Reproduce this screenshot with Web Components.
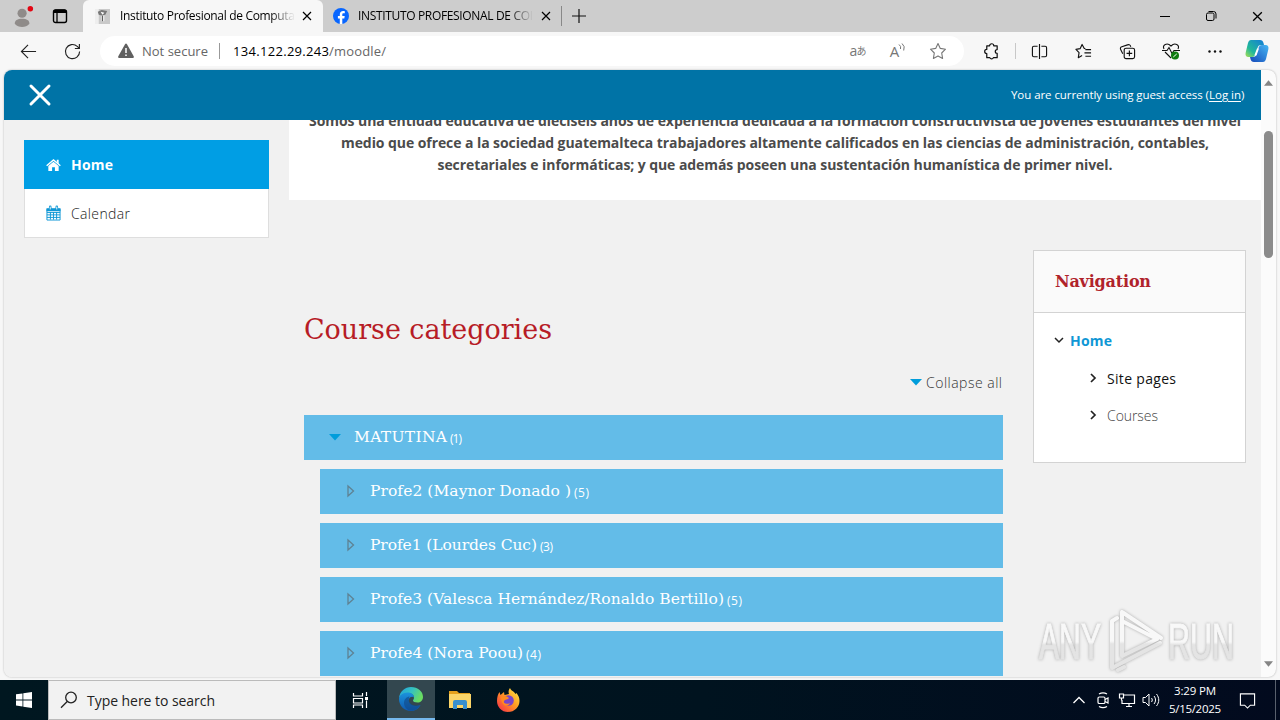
<!DOCTYPE html>
<html lang="en">
<head>
<meta charset="utf-8">
<title>Instituto Profesional de Computación</title>
<style>
  html, body { margin: 0; height: 100%; overflow: hidden; }
  body { font-family: "Open Sans", "Noto Sans", sans-serif; background: #f7f7f7; }
</style>
</head>
<body>
<desktop-screen>
  <browser-tabs slot="browser"></browser-tabs>
  <browser-toolbar slot="browser"></browser-toolbar>
  <browser-viewport slot="browser">
    <moodle-page>
      <side-menu slot="menu">
        <menu-row icon="home" active><fit-text width="42">Home</fit-text></menu-row>
        <menu-row icon="calendar"><fit-text width="59">Calendar</fit-text></menu-row>
      </side-menu>
      <course-tree slot="main">
        <course-row open><fit-text width="93">MATUTINA</fit-text><fit-text slot="count" width="12">(1)</fit-text></course-row>
        <course-row nested><fit-text width="201">Profe2 (Maynor Donado )</fit-text><fit-text slot="count" width="15">(5)</fit-text></course-row>
        <course-row nested><fit-text width="167">Profe1 (Lourdes Cuc)</fit-text><fit-text slot="count" width="13">(3)</fit-text></course-row>
        <course-row nested><fit-text width="354">Profe3 (Valesca Hernández/Ronaldo Bertillo)</fit-text><fit-text slot="count" width="15">(5)</fit-text></course-row>
        <course-row nested><fit-text width="153">Profe4 (Nora Poou)</fit-text><fit-text slot="count" width="15">(4)</fit-text></course-row>
      </course-tree>
      <nav-block slot="aside"></nav-block>
    </moodle-page>
  </browser-viewport>
  <task-bar slot="taskbar"></task-bar>
  <brand-watermark slot="overlay"></brand-watermark>
</desktop-screen>

<script>
// Icon shapes, each with its own viewBox size.
const ICONS = {
  profile: ['0 0 24 24', '<circle cx="11" cy="9" r="5" fill="#8f8b89"/><path d="M3 20.500c0-4 3-5.500 8-5.500s8 1.500 8 5.500c-2 2.500-5 3.500-8 3.500s-6-1-8-3.500z" fill="#8f8b89"/><circle cx="20" cy="4" r="3" fill="#e30613"/>'],
  workspace: ['0 0 16 16', '<rect x="1.500" y="2" width="13" height="12.500" rx="2" fill="none" stroke="#000" stroke-width="1.400"/><path d="M1.500 3.500a2 2 0 0 1 2-2h9a2 2 0 0 1 2 2V5h-13z"/><path d="M5 5v9" stroke="#000" stroke-width="1.300"/>'],
  crest: ['0 0 16 16', '<rect width="16" height="16" fill="#c9c9c9"/><path d="M0 0h4v16H0z" fill="#eee"/><path d="M3 3l4-2 6 1-2 4-4 1-3-1z" fill="#777"/><path d="M6 3l4 1-2 2z" fill="#fff"/><path d="M7 7h3v6H7z" fill="#e8e8e8"/><path d="M8 7v6" stroke="#555"/>'],
  facebook: ['0 0 16 16', '<circle cx="8" cy="8" r="8" fill="#0866ff"/><path d="M6.800 16v-5.500H4.900V8h1.900V6.700c0-2.500 1.200-3.700 3.500-3.700.5 0 1 .1 1.500.2v2.100h-1.200c-1 0-1.300.5-1.300 1.300V8h2.400l-.4 2.500h-2V16z" fill="#fff"/>'],
  x: ['0 0 12 12', '<path d="M2 2l8 8M10 2l-8 8" fill="none" stroke="currentColor" stroke-width="1.200"/>'],
  bigx: ['0 0 22 22', '<path d="M2 2l18 18M20 2L2 20" stroke="#fff" stroke-width="3" stroke-linecap="round"/>'],
  plus: ['0 0 14 14', '<path d="M7 0v14M0 7h14" stroke="#111" stroke-width="1.200"/>'],
  minimize: ['0 0 12 12', '<path d="M1 6.500h10" stroke="#000"/>'],
  restore: ['0 0 12 12', '<rect x="1.500" y="3" width="7.500" height="7.500" rx="1.500" fill="none" stroke="#000"/><path d="M3.500 1.500h5a2.500 2.500 0 0 1 2.500 2.500v4.500" fill="none" stroke="#000"/>'],
  back: ['0 0 18 18', '<path d="M17 9H1.500M8.500 2L1.500 9l7 7" fill="none" stroke="#222" stroke-width="1.200"/>'],
  refresh: ['0 0 18 18', '<path d="M16.500 9A7.500 7.500 0 1 1 14 3.500l2 2M16.300 1v4.800h-4.800" fill="none" stroke="#222" stroke-width="1.200"/>'],
  warning: ['0 0 16 16', '<path d="M7 1.200a1.200 1.200 0 0 1 2 0l6.700 12a1.200 1.200 0 0 1-1 1.800H1.300a1.200 1.200 0 0 1-1-1.800z" fill="#606060"/><path d="M8 5v5M8 11.500v1.500" stroke="#fff" stroke-width="1.500"/>'],
  waves: ['0 0 8 8', '<path d="M1 1.500a4 4 0 0 1 1.500 4.500M4 .5a6 6 0 0 1 1.700 7" fill="none" stroke="#777"/>'],
  star: ['0 0 18 18', '<path d="M9 1.500l2.300 4.900 5.200.8-3.800 3.800.9 5.400L9 13.900l-4.600 2.500.9-5.400-3.800-3.800 5.200-.8z" fill="none" stroke="#777" stroke-width="1.100" stroke-linejoin="round"/>'],
  puzzle: ['0 0 18 18', '<path d="M4 3h3a2.200 2.200 0 0 1 4.400 0H15v4a2 2 0 0 0 0 4v4.500h-4a2 2 0 0 1-3.800 0H4v-4.300a2.200 2.200 0 0 1 0-4.400z" fill="none" stroke="#111" stroke-width="1.300" stroke-linejoin="round"/>'],
  split: ['0 0 18 18', '<path d="M7 3.500H3a1.500 1.500 0 0 0-1.500 1.500v8A1.500 1.500 0 0 0 3 14.500h4M11 3.500h4A1.500 1.500 0 0 1 16.500 5v8a1.500 1.500 0 0 1-1.500 1.500h-4M9 1v16" fill="none" stroke="#111" stroke-width="1.200"/>'],
  favorites: ['0 0 18 18', '<path d="M11 6L9.800 5.800 7.500 1.500 5.400 6l-4.400.7 3.300 3.500-.8 5.300 4-2.200M11 7h6M10 10.500h7M11 14h6" fill="none" stroke="#111" stroke-width="1.200" stroke-linejoin="round"/>'],
  collections: ['0 0 18 18', '<path d="M4 11.500L2 7.500C1 5.500 1.500 4.500 3 4l6-2c2-.7 2.800 0 3.500 2" fill="none" stroke="#111" stroke-width="1.200"/><rect x="5.500" y="5.500" width="11" height="11" rx="2" fill="none" stroke="#111" stroke-width="1.200"/><path d="M11 8v6M8 11h6" stroke="#111" stroke-width="1.200"/>'],
  health: ['0 0 18 18', '<path d="M9 16L3 10M2 7C0 3 5 0 9 4c4-4 9-1 7 3M0 8.500h5l2-3 3 6 2-3h6" fill="none" stroke="#111" stroke-width="1.100"/><circle cx="13" cy="13.500" r="4" fill="#107c10"/><path d="M11.300 15l3.400-3" stroke="#fff"/>'],
  dots: ['0 0 18 18', '<g fill="#111"><circle cx="3.500" cy="9.500" r="1.200"/><circle cx="9" cy="9.500" r="1.200"/><circle cx="14.500" cy="9.500" r="1.200"/></g>'],
  copilot: ['0 0 24 24', '<defs><linearGradient id="a" x1="0" y1="1" x2="1" y2="0"><stop stop-color="#a9df52"/><stop offset=".35" stop-color="#21b89a"/><stop offset="1" stop-color="#137bd8"/></linearGradient><linearGradient id="b" x1="0" y1="1" x2="1" y2="0"><stop stop-color="#1549b9"/><stop offset="1" stop-color="#46b7f4"/></linearGradient></defs><path d="M6 1h9c2 0 3 1 3.500 3L19 6h-3c-2 0-3 1-3.500 3l-2 6c-.6 2-1.500 3-3.500 3H3.500C1 18 0 16 .7 13.500L3 4c.6-2 1.500-3 3-3z" fill="url(#a)"/><path d="M18 23H9c-2 0-3-1-3.500-3L5 18h3c2 0 3-1 3.500-3l2-6c.6-2 1.500-3 3.500-3h3.500c2.500 0 3.500 2 2.800 4.500L21 20c-.6 2-1.500 3-3 3z" fill="url(#b)"/><path d="M12 9.500h2l-2.500 7H9.300z" fill="#fff"/>'],
  home: ['0 0 16 16', '<path d="M8 4.500l5.500 4.500v5.500h-4v-4h-3v4h-4V9z" fill="#fff"/><path d="M.7 8.800L8 2.600l7.300 6.200" fill="none" stroke="#fff" stroke-width="1.500"/><path d="M11.500 2.500h2V7l-2-2z" fill="#fff"/>'],
  calendar: ['0 0 16 16', '<path d="M1 4h14v11.500H1zM1 7.500h14M1 10h14M1 12.700h14M4.700 7v8M8 7v8M11.300 7v8" fill="none" stroke="#0f97d5"/><path d="M.5 3h15v3H.5z" fill="#0f97d5"/><path d="M4.500 1.500v3M11.500 1.500v3" stroke="#0f97d5" stroke-width="2.800" stroke-linecap="round"/><path d="M4.500 1.200v3M11.500 1.200v3" stroke="#fff"/>'],
  caretdown: ['0 0 12 7', '<path d="M0 0h12L6 6.500z" fill="#009ddb"/>'],
  caretright: ['0 0 8 12', '<path d="M1 1l5.500 5L1 11z" fill="none" stroke="#5e8293" stroke-width="1.300"/>'],
  chevdown: ['0 0 10 10', '<path d="M1 3l4 4 4-4" fill="none" stroke="#222" stroke-width="1.500"/>'],
  chevright: ['0 0 10 10', '<path d="M3 1l4 4-4 4" fill="none" stroke="#222" stroke-width="1.700"/>'],
  windows: ['0 0 16 16', '<path d="M0 2.300L6.500 1.400v6.100H0zM7.300 1.300L16 0v7.500H7.300zM0 8.400h6.500v6.100L0 13.600zM7.300 8.400H16V16l-8.700-1.300z" fill="#fff"/>'],
  search: ['0 0 18 18', '<circle cx="11" cy="6.500" r="5.300" fill="none" stroke="#222" stroke-width="1.300"/><path d="M7.200 10.500L1 16.800" stroke="#222" stroke-width="1.300"/>'],
  taskview: ['0 0 17 17', '<path d="M1.500 1v3h9V1M1.500 16v-3h9v3M1.500 6.500h9v4.500h-9zM14.500 0v4M14.500 8.500V16" fill="none" stroke="#fff" stroke-width="1.200"/><path d="M13 5h3v3h-3z" fill="#fff"/>'],
  edge: ['0 0 24 24', '<defs><linearGradient id="e" x1="0" y1="0" x2="1" y2=".4"><stop stop-color="#1f9fe0"/><stop offset=".55" stop-color="#35c2c0"/><stop offset="1" stop-color="#69dc62"/></linearGradient><linearGradient id="f" x1="0" y1="0" x2="0" y2="1"><stop stop-color="#1b93dd"/><stop offset="1" stop-color="#0f58ae"/></linearGradient></defs><path d="M0 11C1 4 6 0 12 0c7 0 12 4.500 12 10 0 3.500-2.500 5.500-5.500 5.500-3 0-4.500-1-4.500-2 0-.7 1-1.200 1-3C15 8 12.500 6 9 6c-4 0-7.500 2-9 5z" fill="url(#e)"/><path d="M0 12c0-3.500 4-6.500 8.500-6.500S15 8 15 10.500C13.500 9 11 9.500 10 12c-1.500 4.500 4 9 11.500 6C19.500 22 16 24 12 24 5 24 0 18.500 0 12z" fill="url(#f)"/><path d="M5 16c0-3.500 2.300-6 5.500-6.500C8 14 12 20.500 21.500 18c-3 5-8 6-11 5.500C7.500 22.500 5 19.500 5 16z" fill="#114a8b" opacity=".65"/>'],
  folder: ['0 0 22 20', '<path d="M0 1h8l2 2h11v4H0z" fill="#e5a11c"/><path d="M0 4h22v14H0z" fill="#fbd568"/><path d="M4 19v-7a2 2 0 0 1 2-2h10a2 2 0 0 1 2 2v7h-4v-4H8v4z" fill="#378fce"/>'],
  firefox: ['0 0 24 24', '<defs><linearGradient id="g" x1="1" y1="0" x2="0" y2="1"><stop stop-color="#fff14a"/><stop offset=".45" stop-color="#ff9c22"/><stop offset="1" stop-color="#f5234d"/></linearGradient></defs><path d="M1 13c0-4 1-7 2.500-9l1 3L8 4l.5 3L13 6c-1-2 0-5 1-6 1 3 4 3 5.500 6l1-1c2 2.500 3 5 3 8 0 6-5 11-11.500 11S1 19 1 13z" fill="url(#g)"/><circle cx="12.500" cy="12.500" r="5.300" fill="#7845c8"/><path d="M5 9c3-2 6-1 8 1-1 2-4 1-5 3s2 4 6 2c-2 5-9 3-9-6z" fill="#ff8a1e"/>'],
  chevup: ['0 0 14 14', '<path d="M1.500 10L7 4.500l5.500 5.500" fill="none" stroke="#fff" stroke-width="1.300"/>'],
  meet: ['0 0 16 16', '<rect x="3" y="5" width="7" height="6.500" rx="1.300" fill="none" stroke="#fff" stroke-width="1.200"/><path d="M10 7.500l3-1.500v5l-3-1.500M4 2c2.500-1.500 5.500-1.500 8 0M4 14.500c2.500 1.500 5.500 1.500 8 0" fill="none" stroke="#fff" stroke-width="1.200"/>'],
  network: ['0 0 18 16', '<path d="M6 3h10.500v8.500H4V8M8 14.500h6M11 11.500v3M1.500 2h4v4h-4zM3.500 6v2.500" fill="none" stroke="#fff" stroke-width="1.200"/>'],
  sound: ['0 0 18 16', '<path d="M1 5.500h2.500L7 2v12l-3.500-3.500H1z" fill="none" stroke="#fff"/><path d="M9.500 6c1 1.300 1 2.700 0 4M12 4c2 2.500 2 5.500 0 8M14.500 2c3 4 3 8 0 12" fill="none" stroke="#fff"/>'],
  notice: ['0 0 18 18', '<path d="M1.500 2h15v12H12l-3 3-3-3H1.500z" fill="none" stroke="#fff" stroke-width="1.200"/>'],
  arrowup: ['0 0 10 6', '<path d="M0 6l5-6 5 6z" fill="#858585"/>'],
  arrowdown: ['0 0 10 6', '<path d="M0 0l5 6 5-6z" fill="#858585"/>']
};

// Defines an element whose shadow root is filled from a markup string.
function define(name, html, setup) {
  const template = document.createElement('template');
  template.innerHTML = html;
  customElements.define(name, class extends HTMLElement {
    constructor() {
      super();
      this.attachShadow({ mode: 'open' }).appendChild(template.content.cloneNode(true));
    }
    connectedCallback() {
      if (setup) setup(this, this.shadowRoot);
    }
  });
}

// <ui-icon name="star" w="18" h="18">
define('ui-icon', `<style>:host{display:inline-flex;flex:none} svg{display:block;overflow:visible}</style><span></span>`, (el, root) => {
  const [box, shape] = ICONS[el.getAttribute('name')];
  const w = el.getAttribute('w') || 18;
  const h = el.getAttribute('h') || w;
  root.querySelector('span').innerHTML = `<svg width="${w}" height="${h}" viewBox="${box}">${shape}</svg>`;
});

// A single line of text that is tracked out or in to fill a set width.
define('fit-text', `<style>:host{display:inline-block;flex:none;white-space:pre} span{display:inline-block;white-space:pre}</style><span><slot></slot></span>`, (el, root) => {
  const span = root.querySelector('span');
  const width = Number(el.getAttribute('width'));
  el.style.width = width + 'px';
  requestAnimationFrame(() => {
    const count = el.textContent.length;
    const natural = span.getBoundingClientRect().width;
    span.style.letterSpacing = (width - natural) / Math.max(1, count - 1) + 'px';
  });
});

define('desktop-screen', `
  <style>
    :host { display: flex; flex-direction: column; position: relative; width: 1280px; height: 720px; overflow: hidden; }
    .browser { height: 680px; display: flex; flex-direction: column; background: #f7f7f7; }
  </style>
  <div class="browser"><slot name="browser"></slot></div>
  <slot name="taskbar"></slot>
  <slot name="overlay"></slot>`);

define('browser-tabs', `
  <style>
    :host { display: flex; height: 32px; background: #cdcdcd; font-size: 12px; color: #000; }
    .left { width: 83px; display: flex; align-items: center; box-sizing: border-box; padding-left: 12px; gap: 18px; }
    .tab { display: flex; align-items: center; box-sizing: border-box; }
    .active { width: 240px; background: #f7f7f7; border-radius: 6px 6px 0 0; padding-left: 12px; }
    .other { width: 238px; padding-left: 10px; }
    .title { overflow: hidden; margin: 0 7px 2px 9px; width: 175px; -webkit-mask-image: linear-gradient(90deg, #000 86%, transparent 100%); }
    .active .title { margin: 0 6px 2px 10px; }
    .bar { width: 1px; height: 20px; background: #888; align-self: center; }
    .plus { margin: 9px 0 0 10px; }
    .window { margin-left: auto; display: flex; align-items: center; }
    .window ui-icon { width: 46px; justify-content: center; }
  </style>
  <div class="left"><ui-icon name="profile" w="22"></ui-icon><ui-icon name="workspace" w="16"></ui-icon></div>
  <div class="tab active">
    <ui-icon name="crest" w="15"></ui-icon>
    <div class="title"><fit-text width="175">Instituto Profesional de Computa</fit-text></div>
    <ui-icon name="x" w="12"></ui-icon>
  </div>
  <div class="tab other">
    <ui-icon name="facebook" w="16"></ui-icon>
    <div class="title"><fit-text width="175">INSTITUTO PROFESIONAL DE COI</fit-text></div>
    <ui-icon name="x" w="12"></ui-icon>
  </div>
  <div class="bar"></div>
  <ui-icon class="plus" name="plus" w="14"></ui-icon>
  <div class="window"><ui-icon name="minimize" w="12"></ui-icon><ui-icon name="restore" w="12"></ui-icon><ui-icon name="x" w="13"></ui-icon></div>`);

define('browser-toolbar', `
  <style>
    :host { display: flex; align-items: center; height: 38px; font-size: 13px; color: #666; }
    ui-icon { justify-content: center; width: 44px; flex: none; }
    ui-icon.back { margin-left: 6px; }
    .pill { width: 864px; height: 30px; box-sizing: border-box; border-radius: 15px; background: #fff; margin: 0 5px 0 6px; padding: 0 6px 0 18px; display: flex; align-items: center; }
    .pill ui-icon.warn { width: 16px; margin-right: 8px; }
    .sep { width: 1px; height: 16px; background: #999; margin: 0 13px 0 11px; }
    .sep.light { background: #c8c8c8; margin: 0 1px 0 2px; }
    b { font-weight: 400; color: #000; }
    .tools { margin-left: auto; display: flex; align-items: center; }
    .tools > * { width: 40px; display: flex; justify-content: center; }
    .translate { font: 14px/20px "Open Sans", "Noto Sans CJK JP", sans-serif; color: #777; }
    .translate small { font-size: 10px; margin-left: -1px; }
    .read { color: #777; font-size: 15px; line-height: 20px; }
    .read ui-icon { width: 8px; height: 8px; margin: 2px 0 0 -1px; }
  </style>
  <ui-icon class="back" name="back" w="17"></ui-icon>
  <ui-icon name="refresh" w="17"></ui-icon>
  <div class="pill">
    <ui-icon class="warn" name="warning" w="16"></ui-icon>
    <fit-text width="66">Not secure</fit-text>
    <div class="sep"></div>
    <b><fit-text width="96">134.122.29.243</fit-text></b><fit-text width="57">/moodle/</fit-text>
    <div class="tools">
      <div class="translate">a<small>あ</small></div>
      <div class="read">A<ui-icon name="waves" w="8"></ui-icon></div>
      <ui-icon name="star" w="18"></ui-icon>
    </div>
  </div>
  <ui-icon name="puzzle" w="17"></ui-icon>
  <div class="sep light"></div>
  <ui-icon name="split" w="17"></ui-icon>
  <ui-icon name="favorites" w="17"></ui-icon>
  <ui-icon name="collections" w="17"></ui-icon>
  <ui-icon name="health" w="18"></ui-icon>
  <ui-icon name="dots" w="18"></ui-icon>
  <ui-icon name="copilot" w="24" style="width:40px"></ui-icon>`);

define('browser-viewport', `
  <style>
    :host { display: flex; height: 607px; margin: 0 4px; border-radius: 8px; overflow: hidden; background: #fbfbfb; box-shadow: 0 0 2px #aaa; }
    .content { width: 1257px; flex: none; overflow: hidden; }
    .scroll { width: 15px; display: flex; flex-direction: column; align-items: center; box-sizing: border-box; padding: 10px 0 10px; }
    .thumb { width: 9px; height: 127px; border-radius: 5px; background: #8b8b8b; margin: 45px 0 auto; }
  </style>
  <div class="content"><slot></slot></div>
  <div class="scroll"><ui-icon name="arrowup" w="9" h="6"></ui-icon><div class="thumb"></div><ui-icon name="arrowdown" w="9" h="6"></ui-icon></div>`);

define('moodle-page', `
  <style>
    :host { display: flex; flex-direction: column; height: 607px; background: #f1f1f1; color: #555; }
    header { height: 50px; flex: none; display: flex; align-items: center; justify-content: space-between; box-sizing: border-box; padding: 0 16px 1px 25px; background: #0073a6; color: #fff; font-size: 11.5px; }
    u { text-underline-offset: 2px; }
    .body { display: flex; flex: 1; min-height: 0; overflow: hidden; }
    .menu { width: 245px; margin: 20px 20px 0; }
    .right { width: 972px; flex: none; }
    .banner { height: 80px; background: #fff; overflow: hidden; font-size: 14px; font-weight: 700; line-height: 22px; color: #4b4b4b; display: flex; flex-direction: column; align-items: center; }
    .banner fit-text { height: 22px; }
    .banner fit-text:first-child { margin-top: -10px; }
    .columns { display: flex; padding-left: 15px; }
    .main { width: 699px; margin-right: 30px; }
    .aside { width: 213px; padding-top: 50px; }
  </style>
  <header>
    <ui-icon name="bigx" w="22"></ui-icon>
    <span><fit-text width="198">You are currently using guest access (</fit-text><fit-text width="32"><u>Log in</u></fit-text><fit-text width="4">)</fit-text></span>
  </header>
  <div class="body">
    <div class="menu"><slot name="menu"></slot></div>
    <div class="right">
      <div class="banner">
        <fit-text width="932">Somos una entidad educativa de dieciséis años de experiencia dedicada a la formación constructivista de jóvenes estudiantes del nivel</fit-text>
        <fit-text width="868">medio que ofrece a la sociedad guatemalteca trabajadores altamente calificados en las ciencias de administración, contables,</fit-text>
        <fit-text width="675">secretariales e informáticas; y que además poseen una sustentación humanística de primer nivel.</fit-text>
      </div>
      <div class="columns">
        <div class="main"><slot name="main"></slot></div>
        <div class="aside"><slot name="aside"></slot></div>
      </div>
    </div>
  </div>`);

define('side-menu', `
  <style>:host { display: block; box-sizing: border-box; border: 1px solid #dedede; border-top: 0; background: #fff; }</style>
  <slot></slot>`);

define('menu-row', `
  <style>
    :host { display: flex; align-items: center; height: 48px; padding-left: 21px; gap: 10px; font-size: 14px; font-weight: 300; color: #222; }
    :host([active]) { height: 49px; margin: 0 -1px; padding-left: 22px; background: #009ee4; color: #fff; font-weight: 700; }
    .icon { display: flex; }
  </style>
  <span class="icon"></span><slot></slot>`, (el, root) => {
  root.querySelector('.icon').innerHTML = `<ui-icon name="${el.getAttribute('icon')}" w="15" h="16"></ui-icon>`;
});

define('course-tree', `
  <style>
    :host { display: block; }
    h2 { margin: 110px 0 0; font: 400 27px/40px "DejaVu Serif", serif; color: #b71c26; }
    .collapse { display: flex; align-items: center; justify-content: flex-end; gap: 4px; height: 22px; margin: 21px 1px 22px 0; font-size: 14px; font-weight: 300; color: #333; }
    .rows { display: flex; flex-direction: column; gap: 9px; }
  </style>
  <h2><fit-text width="248">Course categories</fit-text></h2>
  <div class="collapse"><ui-icon name="caretdown" w="12" h="7"></ui-icon><fit-text width="76">Collapse all</fit-text></div>
  <div class="rows"><slot></slot></div>`);

define('course-row', `
  <style>
    :host { display: flex; align-items: center; height: 45px; box-sizing: border-box; padding: 0 0 1px 25px; background: #63bce8; color: #fff; font: 15.5px "DejaVu Serif", serif; }
    :host([nested]) { margin-left: 16px; }
    .caret { width: 25px; display: flex; }
    :host([nested]) .caret { padding-left: 2px; width: 23px; }
    .count { font: 12px "Open Sans", sans-serif; margin: 3px 0 0 3px; }
  </style>
  <span class="caret"></span><slot></slot><span class="count"><slot name="count"></slot></span>`, (el, root) => {
  root.querySelector('.caret').innerHTML = el.hasAttribute('open')
    ? '<ui-icon name="caretdown" w="12" h="7"></ui-icon>'
    : '<ui-icon name="caretright" w="8" h="12"></ui-icon>';
});

define('nav-block', `
  <style>
    :host { display: block; box-sizing: border-box; height: 213px; border: 1px solid #d3d3d3; background: #fff; font-size: 14px; }
    h3 { margin: 0; height: 62px; box-sizing: border-box; padding-left: 21px; border-bottom: 1px solid #d3d3d3; background: #fafafa; font: 700 16px/61px "DejaVu Serif", serif; color: #b0232b; }
    .item { display: flex; align-items: center; height: 22px; gap: 6px; padding-left: 20px; }
    .home { margin-top: 16px; color: #0f97d5; font-weight: 700; }
    .sub { padding-left: 54px; gap: 9px; margin-top: 16px; color: #111; }
    .last { margin-top: 15px; color: #444; font-weight: 300; }
  </style>
  <h3><fit-text width="96">Navigation</fit-text></h3>
  <div class="item home"><ui-icon name="chevdown" w="10"></ui-icon><fit-text width="42">Home</fit-text></div>
  <div class="item sub"><ui-icon name="chevright" w="10"></ui-icon><fit-text width="69">Site pages</fit-text></div>
  <div class="item sub last"><ui-icon name="chevright" w="10"></ui-icon><fit-text width="51">Courses</fit-text></div>`);

define('task-bar', `
  <style>
    :host { display: flex; height: 40px; background: linear-gradient(90deg, #001720, #00131f 55%, #020a1e); color: #fff; }
    .cell { width: 48px; display: flex; align-items: center; justify-content: center; }
    .search { width: 288px; box-sizing: border-box; border: 1px solid #bbb; background: #f2f2f2; display: flex; align-items: center; gap: 9px; padding-left: 11px; font-size: 14px; color: #222; }
    .edge { width: 48px; margin: 0 1px 0 3px; box-sizing: border-box; border-bottom: 2px solid #76b9ed; background: #33474f; }
    .tray { margin-left: auto; display: flex; align-items: center; }
    .tray > ui-icon { width: 24px; justify-content: center; }
    .clock { width: 56px; margin-left: 4px; display: flex; flex-direction: column; align-items: center; font-size: 11.5px; line-height: 18px; }
    .tray .notice { width: 48px; }
    .peek { width: 4px; height: 40px; border-left: 1px solid #59606d; margin-left: 4px; }
  </style>
  <div class="cell"><ui-icon name="windows" w="16"></ui-icon></div>
  <div class="search"><ui-icon name="search" w="18"></ui-icon><fit-text width="128">Type here to search</fit-text></div>
  <div class="cell"><ui-icon name="taskview" w="17"></ui-icon></div>
  <div class="cell edge"><ui-icon name="edge" w="24"></ui-icon></div>
  <div class="cell"><ui-icon name="folder" w="22" h="20"></ui-icon></div>
  <div class="cell"><ui-icon name="firefox" w="24"></ui-icon></div>
  <div class="tray">
    <ui-icon name="chevup" w="14"></ui-icon><ui-icon name="meet" w="16"></ui-icon><ui-icon name="network" w="18" h="16"></ui-icon><ui-icon name="sound" w="18" h="16"></ui-icon>
    <div class="clock"><fit-text width="42">3:29 PM</fit-text><fit-text width="52">5/15/2025</fit-text></div>
    <ui-icon class="notice" name="notice" w="17"></ui-icon>
    <div class="peek"></div>
  </div>`);

// Translucent mark that floats over the page's lower right corner.
define('brand-watermark', `
  <style>
    :host { display: block; position: absolute; left: 1034px; top: 604px; filter: drop-shadow(0 0 1.5px #aaa); }
    svg { display: block; overflow: visible; }
    text { font: 400 50px "Liberation Sans Narrow", "Liberation Sans", sans-serif; stroke: url(#w); stroke-width: 1px; }
  </style>
  <svg width="212" height="72" viewBox="0 0 212 72">
    <defs><linearGradient id="w" x1="0" y1="0" x2="0" y2="1"><stop offset=".5" stop-color="#f8f8f8"/><stop offset=".55" stop-color="#e4e4e4"/></linearGradient></defs>
    <g fill="url(#w)">
      <text x="5" y="55" textLength="62" lengthAdjust="spacingAndGlyphs">ANY</text>
      <text x="134" y="55" textLength="66" lengthAdjust="spacingAndGlyphs">RUN</text>
    </g>
    <g fill="none" stroke="url(#w)" stroke-width="4" stroke-linejoin="round" stroke-linecap="round">
      <path d="M83 14l-5 3v47l48-25M88 8l39 26M88 8v44l35-17L88 17M84 66l6-3"/>
    </g>
  </svg>`);
</script>
</body>
</html>
